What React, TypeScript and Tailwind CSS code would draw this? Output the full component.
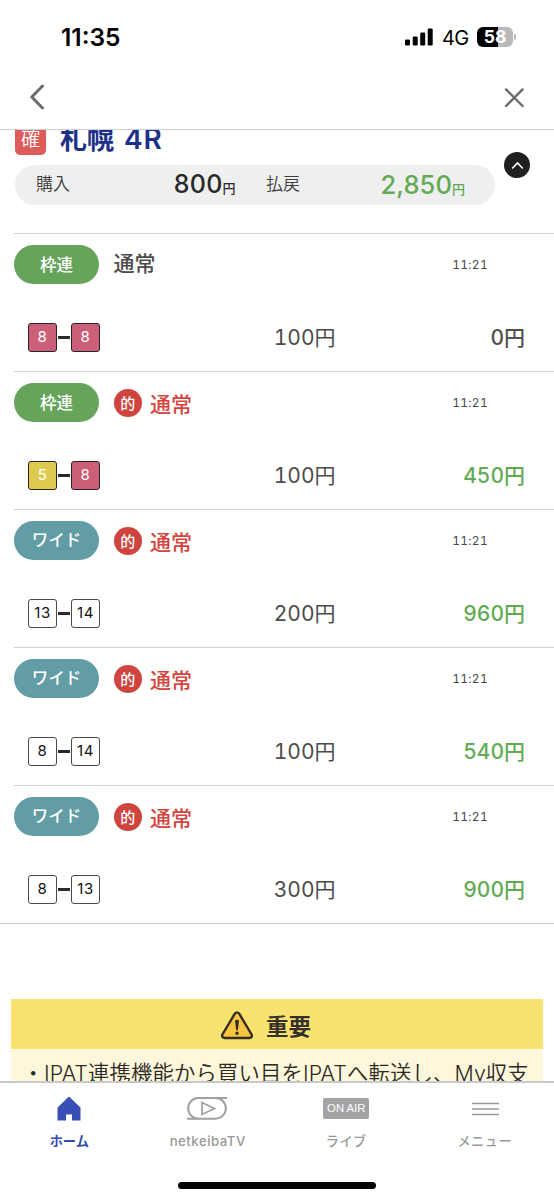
import React from 'react';

type Bet = {
  kind: '枠連' | 'ワイド';
  hit: boolean;
  picks: [string, string];
  stake: string;
  payout: string;
};

const bets: Bet[] = [
  { kind: '枠連', hit: false, picks: ['8', '8'], stake: '100', payout: '0' },
  { kind: '枠連', hit: true, picks: ['5', '8'], stake: '100', payout: '450' },
  { kind: 'ワイド', hit: true, picks: ['13', '14'], stake: '200', payout: '960' },
  { kind: 'ワイド', hit: true, picks: ['8', '14'], stake: '100', payout: '540' },
  { kind: 'ワイド', hit: true, picks: ['8', '13'], stake: '300', payout: '900' },
];

const frameStyle: Record<string, string> = {
  '5': 'bg-[#dfca50] text-white border-[#2b2522] border-[1.5px]',
  '8': 'bg-[#cb6078] text-white border-[#2b2225] border-[1.5px]',
};

function StatusBar() {
  return (
    <div className="flex h-[74px] items-center justify-between pl-[61px] pr-[38px]">
      <span className="text-[24.5px] font-semibold leading-none tracking-[0px] text-black">11:35</span>
      <div className="flex items-center">
        <svg width="28" height="18" viewBox="0 0 28 18" fill="#000">
          <rect x="0" y="11.5" width="5" height="6" rx="1.3" />
          <rect x="7.7" y="8.5" width="5" height="9" rx="1.3" />
          <rect x="15.2" y="4.5" width="5" height="13" rx="1.3" />
          <rect x="22.7" y="0.5" width="5" height="17" rx="1.3" />
        </svg>
        <span className="ml-[9px] w-[28px] pt-[1px] text-[20px] leading-none tracking-[-0.6px] text-black">4G</span>
        <div className="ml-[7px] flex h-[20px] w-[36px] items-center justify-center overflow-hidden rounded-[6px] bg-[linear-gradient(90deg,#000_58%,#b9b9b9_58%)]">
          <span className="text-[17.5px] font-bold leading-none tracking-[0px] text-white">58</span>
        </div>
        <div className="ml-[1px] h-[6px] w-[2px] rounded-r-full bg-[#b9b9b9]" />
      </div>
    </div>
  );
}

function Header() {
  return (
    <div className="flex h-[55px] items-center justify-between pl-[29px] pr-[29px] pb-[8px]">
      <svg className="mt-[-2px]" width="17" height="26" viewBox="0 0 17 26" fill="none" stroke="#6b6b6b" strokeWidth="3" strokeLinecap="round" strokeLinejoin="round">
        <path d="M13.5 2 L2.8 13 L13.5 24" />
      </svg>
      <svg width="22" height="22" viewBox="0 0 22 22" fill="none" stroke="#6b6b6b" strokeWidth="2.4" strokeLinecap="round">
        <path d="M3 2.4 L19.6 19 M19.6 2.4 L3 19" />
      </svg>
    </div>
  );
}

function Pick({ value, framed }: { value: string; framed: boolean }) {
  return (
    <span
      className={`flex h-[29px] w-[29px] items-center justify-center rounded-[3px] pb-[2px] text-[15px] leading-none tracking-[0.6px] ${
        framed ? frameStyle[value] : 'border-[1.5px] border-[#4a4a4a] bg-white text-[#111]'
      }`}
    >
      {value}
    </span>
  );
}

function BetRow({ bet }: { bet: Bet }) {
  const framed = bet.kind === '枠連';
  return (
    <div className="ml-[14px] h-[138px] border-t-[1.5px] border-[#d0d0d0] pt-[11px]">
      <div className="flex h-[39px] items-center">
        <span
          className={`flex h-[39px] w-[85px] items-center justify-center rounded-full text-[16.5px] font-medium leading-none text-white ${
            framed ? 'bg-[#66a45c] pt-[1px]' : 'bg-[#629ca4]'
          }`}
        >
          {bet.kind}
        </span>
        {bet.hit && (
          <span className="ml-[14.5px] mt-[1px] flex h-[28.5px] w-[28.5px] items-center justify-center rounded-full bg-[#cf443e] text-[15px] font-medium leading-none text-white">
            的
          </span>
        )}
        <span className={`text-[21px] font-medium leading-none ${bet.hit ? 'ml-[8px] pt-[3px] text-[#d24540]' : 'ml-[14.5px] pb-[2px] text-[#4c4c4c]'}`}>
          通常
        </span>
        <span className="ml-auto mr-[66px] pt-[1px] text-[12px] leading-none tabular-nums tracking-[0.3px] text-[#4a4a4a]">11:21</span>
      </div>
      <div className="mt-[39px] flex h-[29px] items-center pl-[14px]">
        <Pick value={bet.picks[0]} framed={framed} />
        <span className="mx-[1px] h-[3px] w-[12px] bg-[#292929]" />
        <Pick value={bet.picks[1]} framed={framed} />
        <span className="w-[235.5px] text-right text-[21px] leading-none tabular-nums text-[#4c4c4c]">{bet.stake}円</span>
        <span
          className={`ml-auto mr-[29px] text-right text-[21px] font-medium leading-none tabular-nums ${
            bet.hit ? 'text-[#62ab55]' : 'text-[#505050]'
          }`}
        >
          {bet.payout}円
        </span>
      </div>
    </div>
  );
}

function RaceSummary() {
  return (
    <div className="flex h-[103px] flex-col">
      <div className="mt-[-8px] flex h-[33px] shrink-0 items-center pl-[15px]">
        <span className="flex h-[33px] w-[31px] items-center justify-center rounded-[5px] bg-[#dd5c59] pt-[2px] text-[19px] font-[350] leading-none text-white">確</span>
        <span className="ml-[14px] text-[27px] font-bold leading-none text-[#1c3187]">
          札幌<span className="ml-[10px] text-[28px] font-semibold tracking-[0.8px]">4R</span>
        </span>
      </div>
      <div className="flex">
        <div className="ml-[15px] mt-[9.5px] flex h-[40px] w-[480px] items-center rounded-full bg-[#efefef] pl-[21px] text-[#292929]">
          <span className="w-[60px] text-[17px] font-[350] leading-none text-[#404040]">購入</span>
          <span className="flex w-[139.5px] items-baseline justify-end leading-none">
            <span className="text-[25px] font-medium tracking-[0.2px]">800</span>
            <span className="text-[13px] font-medium">円</span>
          </span>
          <span className="ml-[30.5px] text-[17px] font-[350] leading-none text-[#404040]">払戻</span>
          <span className="ml-auto mr-[30px] flex items-baseline leading-none text-[#62ab55]">
            <span className="text-[25.5px] font-medium tracking-[0.1px]">2,850</span>
            <span className="text-[13px] font-medium">円</span>
          </span>
        </div>
        <span className="ml-[9px] mt-[-3px] flex h-[26px] w-[26px] items-center justify-center rounded-full bg-[#202020]">
          <svg width="13" height="9" viewBox="0 0 13 9" fill="none" stroke="#fff" strokeWidth="1.6">
            <path d="M1.2 7.5 L6.5 2 L11.8 7.5" />
          </svg>
        </span>
      </div>
    </div>
  );
}

function Notice() {
  return (
    <div className="mx-[11px] mt-[75.5px] bg-[#fef7dc]">
      <div className="flex h-[50px] items-center justify-center bg-[#f9e370] pr-[23px] pt-[7px]">
        <svg className="mt-[-4px]" width="34" height="29" viewBox="0 0 34 29">
          <path d="M14.8 2.7 Q17 0.1 19.2 2.7 L31.6 23.5 Q32.7 26.7 29.5 27 H4.5 Q1.3 26.7 2.4 23.5 Z" fill="#f8c541" stroke="#332e24" strokeWidth="2.4" strokeLinejoin="round" />
          <path d="M15 9.5 Q17 8.2 19 9.5 L17.8 19.2 H16.2 Z" fill="#332e24" />
          <circle cx="17" cy="22.2" r="1.7" fill="#332e24" />
        </svg>
        <span className="ml-[12px] text-[22.5px] font-bold leading-none text-[#35312a]">重要</span>
      </div>
      <p className="whitespace-nowrap pl-[11.5px] pt-[10px] font-['Inter','Noto_Sans_CJK_JP',sans-serif] text-[21.4px] font-[350] leading-[28px] tracking-[0.1px] text-[#2c2a25]">
        ・IPAT連携機能から買い目をIPATへ転送し、My収支
      </p>
    </div>
  );
}

function NavItem({ label, active, children }: { label: string; active?: boolean; children: React.ReactNode }) {
  return (
    <div className={`flex flex-1 flex-col items-center ${active ? 'text-[#354bb1]' : 'text-[#999]'}`}>
      <div className="flex h-[28px] items-center">{children}</div>
      <span className={`mt-[11px] text-[13.2px] leading-[16px] ${active ? 'font-bold' : 'tracking-[0.5px] font-medium'}`}>{label}</span>
    </div>
  );
}

function BottomNav() {
  return (
    <div className="flex h-[119px] flex-col border-t-2 border-[#c8c8c8] bg-white">
      <div className="flex h-[98px] pt-[11px]">
        <NavItem label="ホーム" active>
          <svg width="24" height="25" viewBox="0 0 24 25" fill="#3850b5">
            <path d="M12 0.5 L23.5 11.5 V24.5 H15 V18.5 H9 V24.5 H0.5 V11.5 Z" />
          </svg>
        </NavItem>
        <NavItem label="netkeibaTV">
          <svg className="mr-[2px]" width="40" height="25" viewBox="0 0 40 25" fill="none" stroke="#a0a0a0" strokeWidth="2">
            <path d="M40 2 H11.5 A10.3 10.3 0 0 0 11.5 22.7 M28.5 2 A10.3 10.3 0 0 1 28.5 22.7 H0" />
            <path d="M15 6.5 L27.5 12.5 L15 18.5 Z" strokeWidth="1.7" />
          </svg>
        </NavItem>
        <NavItem label="ライブ">
          <span className="flex h-[21px] w-[46px] items-center justify-center rounded-[2px] bg-[#a3a3a3] pt-[1px] font-['Liberation_Sans',sans-serif] text-[11.3px] leading-none text-white">ON AIR</span>
        </NavItem>
        <NavItem label="メニュー">
          <svg className="ml-[1px] mt-[2px]" width="27" height="14" viewBox="0 0 27 14" stroke="#999" strokeWidth="1.4">
            <path d="M0 1.5 H27 M0 7 H27 M0 12.5 H27" />
          </svg>
        </NavItem>
      </div>
      <div className="mx-auto mt-[1px] h-[7px] w-[198px] rounded-full bg-black" />
    </div>
  );
}

export default function App() {
  return (
    <div className="h-[1200px] w-[554px] overflow-hidden bg-white font-['Inter','Noto_Sans_CJK_JP',sans-serif]">
      <StatusBar />
      <Header />
      <main className="flex h-[952px] flex-col overflow-hidden border-t-[1.5px] border-[#cfcfcf]">
        <div className="shrink-0">
          <RaceSummary />
          {bets.map((bet, i) => (
            <BetRow key={i} bet={bet} />
          ))}
          <div className="mt-[-0.5px] h-[1px] bg-[#cfcfcf]" />
          <Notice />
        </div>
      </main>
      <BottomNav />
    </div>
  );
}
